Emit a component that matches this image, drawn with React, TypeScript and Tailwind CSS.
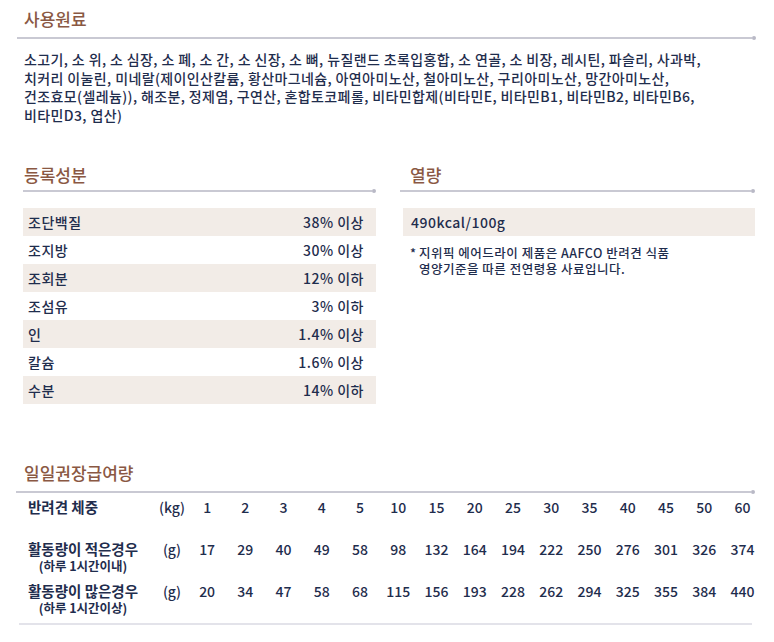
const font = { fontFamily: '"Noto Sans CJK KR", "Noto Sans", sans-serif' };

const nutrients = [
  ["조단백질", "38% 이상"],
  ["조지방", "30% 이상"],
  ["조회분", "12% 이하"],
  ["조섬유", "3% 이하"],
  ["인", "1.4% 이상"],
  ["칼슘", "1.6% 이상"],
  ["수분", "14% 이하"],
];

const weights = ["1", "2", "3", "4", "5", "10", "15", "20", "25", "30", "35", "40", "45", "50", "60"];
const low = ["17", "29", "40", "49", "58", "98", "132", "164", "194", "222", "250", "276", "301", "326", "374"];
const high = ["20", "34", "47", "58", "68", "115", "156", "193", "228", "262", "294", "325", "355", "384", "440"];

function Rule({ className = "" }: { className?: string }) {
  return (
    <div className={`flex items-center ${className}`}>
      <div className="h-[2px] flex-1 bg-[#c9c9d3]" />
      <div className="h-[4px] w-[4px] rounded-full bg-[#b9b9c6]" />
    </div>
  );
}

function Title({ children }: { children: React.ReactNode }) {
  return (
    <h2 className="text-[17px] leading-[22px] font-medium text-[#8a5843]">{children}</h2>
  );
}

function Row({ label, sub, values, unit, bold }: { label: string; sub?: string; values: string[]; unit: string; bold?: boolean }) {
  return (
    <div className="grid grid-cols-[128px_32px_repeat(15,38.24px)] pl-[28px] text-[#1f2d4d]">
      <div className="flex">
        <div className="flex flex-col items-center">
          <span className={`text-[14.5px] leading-[18px] ${bold ? "font-bold" : "font-semibold"}`}>{label}</span>
          {sub && <span className="text-[12.5px] leading-[15px] font-semibold">{sub}</span>}
        </div>
      </div>
      <div className="text-center text-[14px] leading-[18px] font-medium">{unit}</div>
      {values.map((v, i) => (
        <div key={i} className="text-center text-[14px] leading-[18px] font-medium">
          {v}
        </div>
      ))}
    </div>
  );
}

export default function App() {
  return (
    <div className="w-[774px] h-[642px] bg-white pt-[8px] text-[#1f2d4d]" style={font}>
      <div className="pl-[24px]">
        <Title>사용원료</Title>
      </div>
      <Rule className="ml-[17px] mr-[18px] mt-[6px]" />
      <p className="mt-[10px] pl-[24px] text-[14px] leading-[18.6px] font-medium tracking-[0.38px]">
        소고기, 소 위, 소 심장, 소 폐, 소 간, 소 신장, 소 뼈, 뉴질랜드 초록입홍합, 소 연골, 소 비장, 레시틴, 파슬리, 사과박,
        <br />
        치커리 이눌린, 미네랄(제이인산칼륨, 황산마그네슘, 아연아미노산, 철아미노산, 구리아미노산, 망간아미노산,
        <br />
        건조효모(셀레늄)), 해조분, 정제염, 구연산, 혼합토코페롤, 비타민합제(비타민E, 비타민B1, 비타민B2, 비타민B6,
        <br />
        비타민D3, 엽산)
      </p>

      <div className="mt-[40px] grid grid-cols-[353px_355px] gap-x-[24px] pl-[23px]">
        <div>
          <div className="pl-[1px]">
            <Title>등록성분</Title>
          </div>
          <Rule className="mt-[3px]" />
          <div className="mt-[15px]">
            {nutrients.map(([k, v], i) => (
              <div
                key={k}
                className={`flex h-[28px] items-center justify-between pl-[5px] pr-[12px] text-[14px] font-medium tracking-[0.5px] ${
                  i % 2 === 0 ? "bg-[#f2ece7]" : ""
                }`}
              >
                <span>{k}</span>
                <span>{v}</span>
              </div>
            ))}
          </div>
        </div>
        <div>
          <div className="pl-[10px]">
            <Title>열량</Title>
          </div>
          <Rule className="mt-[3px]" />
          <div className="mt-[15px] ml-[3px] flex h-[28px] items-center bg-[#f2ece7] pl-[8px] text-[14px] font-medium tracking-[0.5px]">
            490kcal/100g
          </div>
          <div className="mt-[9px] flex pl-[10px] text-[12.5px] leading-[15.5px] font-medium tracking-[0.5px]">
            <span className="w-[9px] shrink-0">*</span>
            <span>
              지위픽 에어드라이 제품은 AAFCO 반려견 식품
              <br />
              영양기준을 따른 전연령용 사료입니다.
            </span>
          </div>
        </div>
      </div>

      <div className="mt-[58px] pl-[24px]">
        <Title>일일권장급여량</Title>
      </div>
      <Rule className="ml-[16px] mr-[19px] mt-[6px]" />
      <div className="mt-[4px]">
        <Row label="반려견 체중" unit="(kg)" values={weights} bold />
      </div>
      <div className="mt-[24px]">
        <Row label="활동량이 적은경우" sub="(하루 1시간이내)" unit="(g)" values={low} />
      </div>
      <div className="mt-[9px]">
        <Row label="활동량이 많은경우" sub="(하루 1시간이상)" unit="(g)" values={high} />
      </div>
      <div className="ml-[19px] mr-[22px] mt-[8px] h-[2px] bg-[#e3e3ea]" />
    </div>
  );
}
